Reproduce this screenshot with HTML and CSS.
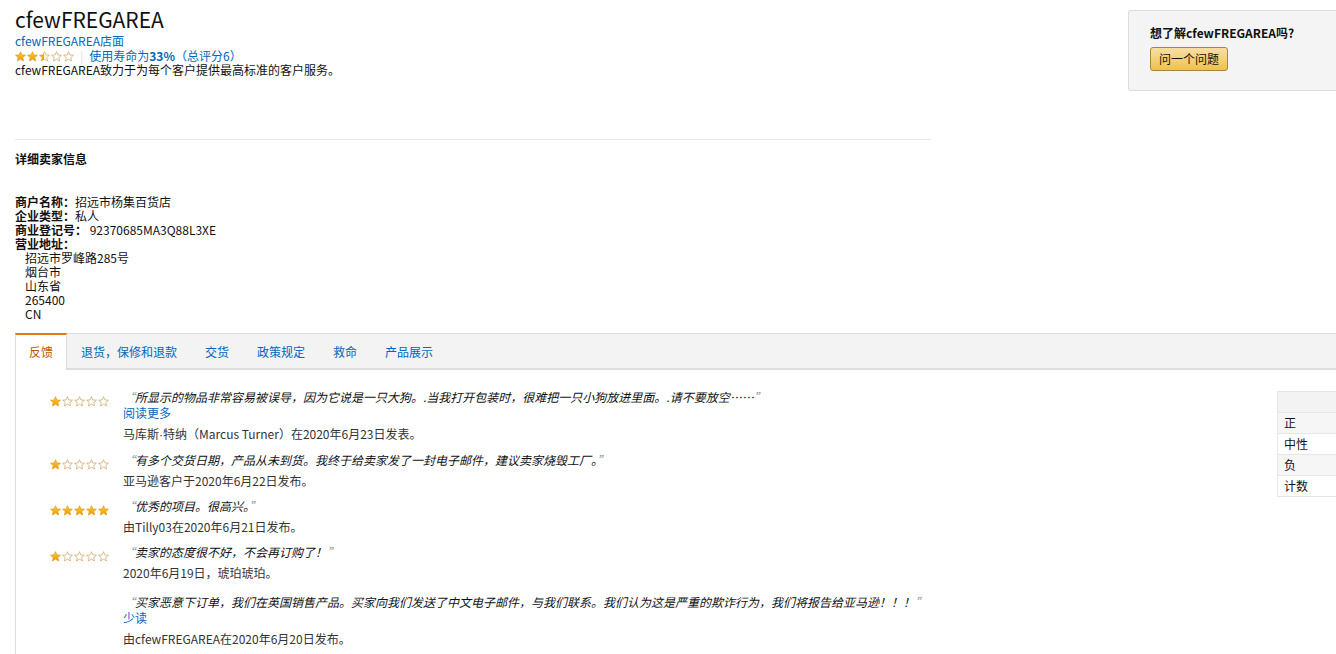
FILE: index.html
```html
<!DOCTYPE html>
<html lang="zh">
<head>
<meta charset="utf-8">
<title>cfewFREGAREA</title>
<link rel="stylesheet" href="styles.css">
</head>
<body>
<svg class="defs" aria-hidden="true">
  <defs>
    <linearGradient id="gold" x1="0" y1="0" x2="0" y2="1">
      <stop offset="0" stop-color="#ffce3c"/>
      <stop offset="1" stop-color="#f09a00"/>
    </linearGradient>
    <linearGradient id="halfgold" x1="0" y1="0" x2="1" y2="0">
      <stop offset="0.5" stop-color="#f5aa10"/>
      <stop offset="0.5" stop-color="#ffffff"/>
    </linearGradient>
    <symbol id="star-full" viewBox="0 0 24 24">
      <polygon points="12,1.5 15.1,8.6 22.8,9.2 16.9,14.2 18.7,21.8 12,17.7 5.3,21.8 7.1,14.2 1.2,9.2 8.9,8.6" fill="url(#gold)" stroke="#d98c00" stroke-width="1.3" stroke-linejoin="round"/>
    </symbol>
    <symbol id="star-empty" viewBox="0 0 24 24">
      <polygon points="12,1.5 15.1,8.6 22.8,9.2 16.9,14.2 18.7,21.8 12,17.7 5.3,21.8 7.1,14.2 1.2,9.2 8.9,8.6" fill="#fff" stroke="#c9a15a" stroke-width="1.5" stroke-linejoin="round"/>
    </symbol>
    <symbol id="star-half" viewBox="0 0 24 24">
      <polygon points="12,1.5 15.1,8.6 22.8,9.2 16.9,14.2 18.7,21.8 12,17.7 5.3,21.8 7.1,14.2 1.2,9.2 8.9,8.6" fill="url(#halfgold)" stroke="#d29a3a" stroke-width="1.4" stroke-linejoin="round"/>
    </symbol>
  </defs>
</svg>

<div class="page">
  <div class="top">
    <div class="top-main">
      <h1 class="title">cfewFREGAREA</h1>
      <a class="link" href="#">cfewFREGAREA店面</a>
      <div class="rating-row">
        <span class="stars">
          <svg class="star"><use href="#star-full"/></svg><svg class="star"><use href="#star-full"/></svg><svg class="star"><use href="#star-half"/></svg><svg class="star"><use href="#star-empty"/></svg><svg class="star"><use href="#star-empty"/></svg>
        </span>
        <span class="sep">|</span>
        <a class="link" href="#">使用寿命为<b>33%</b>（总评分6）</a>
      </div>
      <p class="desc">cfewFREGAREA致力于为每个客户提供最高标准的客户服务。</p>
    </div>
    <div class="askbox">
      <div class="ask-title">想了解cfewFREGAREA吗?</div>
      <button class="ask-btn">问一个问题</button>
    </div>
  </div>

  <div class="seller">
    <h3 class="seller-h">详细卖家信息</h3>
    <ul class="info">
      <li><b>商户名称：</b>招远市杨集百货店</li>
      <li><b>企业类型：</b>私人</li>
      <li><b>商业登记号：</b> 92370685MA3Q88L3XE</li>
      <li><b>营业地址：</b></li>
      <li class="addr">招远市罗峰路285号</li>
      <li class="addr">烟台市</li>
      <li class="addr">山东省</li>
      <li class="addr">265400</li>
      <li class="addr">CN</li>
    </ul>
  </div>

  <div class="tabs-section">
    <ul class="tabs">
      <li class="tab active">反馈</li>
      <li class="tab">退货，保修和退款</li>
      <li class="tab">交货</li>
      <li class="tab">政策规定</li>
      <li class="tab">救命</li>
      <li class="tab">产品展示</li>
    </ul>
    <div class="tab-body">
      <div class="reviews">
        <div class="review">
          <span class="stars rstars"><svg class="star"><use href="#star-full"/></svg><svg class="star"><use href="#star-empty"/></svg><svg class="star"><use href="#star-empty"/></svg><svg class="star"><use href="#star-empty"/></svg><svg class="star"><use href="#star-empty"/></svg></span>
          <div class="rtext">
            <p class="quote"><span class="q">“</span>所显示的物品非常容易被误导，因为它说是一只大狗。.当我打开包装时，很难把一只小狗放进里面。.请不要放空……<span class="q">”</span></p>
            <a class="link more" href="#">阅读更多</a>
            <p class="meta">马库斯<span class="dot">·</span>特纳（Marcus Turner）在2020年6月23日发表。</p>
          </div>
        </div>
        <div class="review">
          <span class="stars rstars"><svg class="star"><use href="#star-full"/></svg><svg class="star"><use href="#star-empty"/></svg><svg class="star"><use href="#star-empty"/></svg><svg class="star"><use href="#star-empty"/></svg><svg class="star"><use href="#star-empty"/></svg></span>
          <div class="rtext">
            <p class="quote"><span class="q">“</span>有多个交货日期，产品从未到货。我终于给卖家发了一封电子邮件，建议卖家烧毁工厂。<span class="q">”</span></p>
            <p class="meta">亚马逊客户于2020年6月22日发布。</p>
          </div>
        </div>
        <div class="review">
          <span class="stars rstars"><svg class="star"><use href="#star-full"/></svg><svg class="star"><use href="#star-full"/></svg><svg class="star"><use href="#star-full"/></svg><svg class="star"><use href="#star-full"/></svg><svg class="star"><use href="#star-full"/></svg></span>
          <div class="rtext">
            <p class="quote"><span class="q">“</span>优秀的项目。很高兴。<span class="q">”</span></p>
            <p class="meta">由Tilly03在2020年6月21日发布。</p>
          </div>
        </div>
        <div class="review">
          <span class="stars rstars"><svg class="star"><use href="#star-full"/></svg><svg class="star"><use href="#star-empty"/></svg><svg class="star"><use href="#star-empty"/></svg><svg class="star"><use href="#star-empty"/></svg><svg class="star"><use href="#star-empty"/></svg></span>
          <div class="rtext">
            <p class="quote"><span class="q">“</span>卖家的态度很不好，不会再订购了！<span class="q">”</span></p>
            <p class="meta">2020年6月19日，琥珀琥珀。</p>
          </div>
        </div>
        <div class="review response">
          <span class="stars rstars blank"></span>
          <div class="rtext">
            <p class="quote"><span class="q">“</span>买家恶意下订单，我们在英国销售产品。买家向我们发送了中文电子邮件，与我们联系。我们认为这是严重的欺诈行为，我们将报告给亚马逊！！！<span class="q">”</span></p>
            <a class="link more" href="#">少读</a>
            <p class="meta">由cfewFREGAREA在2020年6月20日发布。</p>
          </div>
        </div>
      </div>
      <table class="summary">
        <tr class="head"><td></td></tr>
        <tr class="alt"><td>正</td></tr>
        <tr><td>中性</td></tr>
        <tr class="alt"><td>负</td></tr>
        <tr><td>计数</td></tr>
      </table>
    </div>
  </div>
</div>
</body>
</html>
```

FILE: styles.css
```css
html, body {
  margin: 0;
  padding: 0;
  overflow: hidden;
}
body {
  font-family: "Noto Sans CJK SC", "Noto Sans", sans-serif;
  font-size: 12px;
  line-height: 14px;
  color: #111;
  background: #fff;
}
.defs {
  width: 0;
  height: 0;
  overflow: hidden;
  display: block;
}
.page {
  width: 1349px;
  padding-left: 15px;
}
a.link {
  color: #0066c0;
  text-decoration: none;
}
.top {
  display: flex;
  align-items: flex-start;
}
.top-main {
  width: 915px;
}
.title {
  margin: 6px 0 2px;
  font-size: 21px;
  line-height: 26px;
  font-weight: 400;
  color: #111;
}
.top-main > .link {
  display: block;
}
.rating-row {
  display: flex;
  align-items: center;
  height: 14px;
  margin-top: 1px;
}
.stars {
  display: inline-flex;
  gap: 1px;
}
.star {
  width: 11px;
  height: 11px;
  display: block;
}
.sep {
  color: #ddd;
  margin: 0 6px 0 6px;
}
.desc {
  margin: 0;
}
.askbox {
  margin-left: auto;
  margin-top: 10px;
  width: 236px;
  height: 81px;
  box-sizing: border-box;
  padding: 15px 0 0 21px;
  background: #f4f4f4;
  border: 1px solid #ddd;
  border-right: none;
  border-radius: 3px 0 0 3px;
}
.ask-title {
  font-weight: 700;
  font-size: 12px;
  line-height: 14px;
}
.ask-btn {
  margin-top: 7px;
  font: inherit;
  font-size: 12px;
  line-height: 14px;
  color: #111;
  padding: 4px 8px;
  border: 1px solid #a88734;
  border-radius: 3px;
  background: linear-gradient(#f7dfa5, #f0c14b);
}
.seller {
  width: 915px;
  margin-top: 48px;
  border-top: 1px solid #e7e7e7;
}
.seller-h {
  margin: 12px 0 0;
  font-size: 12px;
  line-height: 14px;
  font-weight: 700;
}
.info {
  list-style: none;
  margin: 29px 0 0;
  padding: 0;
}
.info li.addr {
  padding-left: 10px;
}
.dot {
  font-family: "Liberation Sans", sans-serif;
}
.tabs-section {
  margin-top: 12px;
}
.tabs {
  list-style: none;
  margin: 0;
  padding: 0;
  display: flex;
  background: #f3f3f3;
  border-top: 1px solid #ddd;
  border-bottom: 2px solid #ddd;
  height: 34px;
}
.tab {
  padding: 1px 14px 0;
  line-height: 34px;
  color: #0066c0;
}
.tab.active {
  background: #fff;
  color: #c45500;
  margin-top: -1px;
  border-top: 2px solid #e47911;
  border-left: 1px solid #ddd;
  border-right: 1px solid #ddd;
  padding: 0 13px;
  line-height: 34px;
  height: 35px;
}
.tab-body {
  display: flex;
  align-items: flex-start;
  border-left: 1px solid #ddd;
  padding-top: 19px;
}
.reviews {
  flex: 1;
  padding-left: 34px;
}
.review {
  display: flex;
  margin-bottom: 9px;
}
.review.response {
  margin-top: 13px;
}
.rstars {
  width: 59px;
  margin-top: 7px;
  margin-right: 14px;
  flex: none;
}
.rstars.blank {
  height: 11px;
}
.rtext p {
  margin: 0;
}
.quote {
  font-style: italic;
  line-height: 16px;
}
.q {
  color: #999;
}
.more {
  display: block;
  line-height: 16px;
  margin-bottom: 1px;
}
.meta {
  color: #333;
  margin-top: 5px !important;
  line-height: 16px;
}
.summary {
  width: 87px;
  margin-top: 2px;
  border-collapse: collapse;
  border-left: 1px solid #e7e7e7;
  flex: none;
}
.summary td {
  height: 20px;
  padding: 0 6px;
  border-top: 1px solid #e7e7e7;
  font-size: 12px;
  line-height: 14px;
}
.summary tr.head td {
  background: #f3f3f3;
  height: 20px;
}
.summary tr.alt td {
  background: #f6f6f6;
}
.summary tr:last-child td {
  border-bottom: 1px solid #e7e7e7;
}
```
